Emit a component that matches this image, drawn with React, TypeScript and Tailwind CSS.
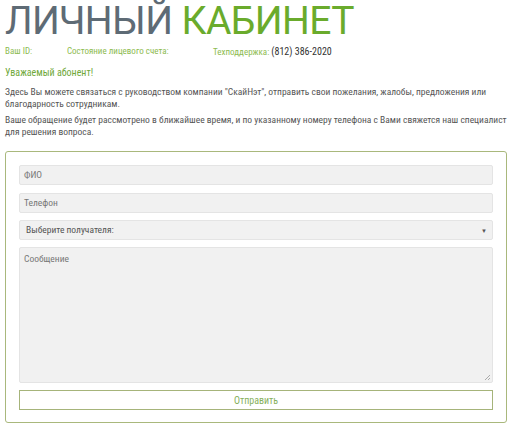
import React from "react";

export default function App() {
  const cond = "[font-family:Roboto,'Liberation_Sans',sans-serif] [font-stretch:75%]";
  return (
    <div className={`w-[514px] h-[430px] bg-white overflow-hidden ${cond}`}>
      <div className="pl-[5px] pr-[7px]">
        <h1 className="text-[39px] leading-[42px] font-normal tracking-[-0.6px] [font-stretch:100%] whitespace-nowrap">
          <span className="text-[#5e6b75]">ЛИЧНЫЙ</span>{" "}
          <span className="text-[#6aab2c]">КАБИНЕТ</span>
        </h1>
        <div className="flex text-[9px] leading-[11px] mt-[4px] text-[#8dbb4f] whitespace-nowrap">
          <span className="w-[62px]">Ваш ID:</span>
          <span className="w-[146px]">Состояние лицевого счета:</span>
          <span>
            Техподдержка: <span className="text-[#333] text-[10px]">(812) 386-2020</span>
          </span>
        </div>
        <div className="mt-[9px] text-[10px] leading-[12px] text-[#6fa83a]">Уважаемый абонент!</div>
        <p className="mt-[7px] text-[9.5px] leading-[11.5px] text-[#555]">
          Здесь Вы можете связаться с руководством компании "СкайНэт", отправить свои пожелания, жалобы, предложения или
          благодарность сотрудникам.
        </p>
        <p className="mt-[5px] text-[9.5px] leading-[11.5px] text-[#555]">
          Ваше обращение будет рассмотрено в ближайшее время, и по указанному номеру телефона с Вами свяжется наш специалист
          для решения вопроса.
        </p>
        <div className="mt-[14px] border border-[#a9b87c] rounded-[3px] px-[13px] pt-[13px] pb-[12px] flex flex-col">
          <div className="h-[20px] bg-[#f1f1f1] border border-[#e4e4e4] rounded-[2px] flex items-center px-[4px] text-[9.5px] text-[#777]">
            ФИО
          </div>
          <div className="mt-[8px] h-[20px] bg-[#f1f1f1] border border-[#e4e4e4] rounded-[2px] flex items-center px-[4px] text-[9.5px] text-[#777]">
            Телефон
          </div>
          <div className="mt-[7px] h-[20px] bg-[#f1f1f1] border border-[#e4e4e4] rounded-[2px] flex items-center justify-between pl-[6px] pr-[5px] text-[9.5px] text-[#555]">
            <span>Выберите получателя:</span>
            <span className="text-[6px] text-[#555]">▼</span>
          </div>
          <div className="relative mt-[7px] h-[136px] bg-[#f1f1f1] border border-[#e4e4e4] rounded-[2px] px-[4px] pt-[4px] text-[9.5px] text-[#777]">
            Сообщение
            <svg className="absolute right-[1px] bottom-[1px]" width="7" height="7" viewBox="0 0 7 7">
              <path d="M6 1 L1 6 M6 4 L4 6" stroke="#999" strokeWidth="0.8" />
            </svg>
          </div>
          <div className="mt-[7px] h-[20px] border border-[#a6b47a] flex items-center justify-center text-[10px] text-[#86b05c]">
            Отправить
          </div>
        </div>
      </div>
    </div>
  );
}
